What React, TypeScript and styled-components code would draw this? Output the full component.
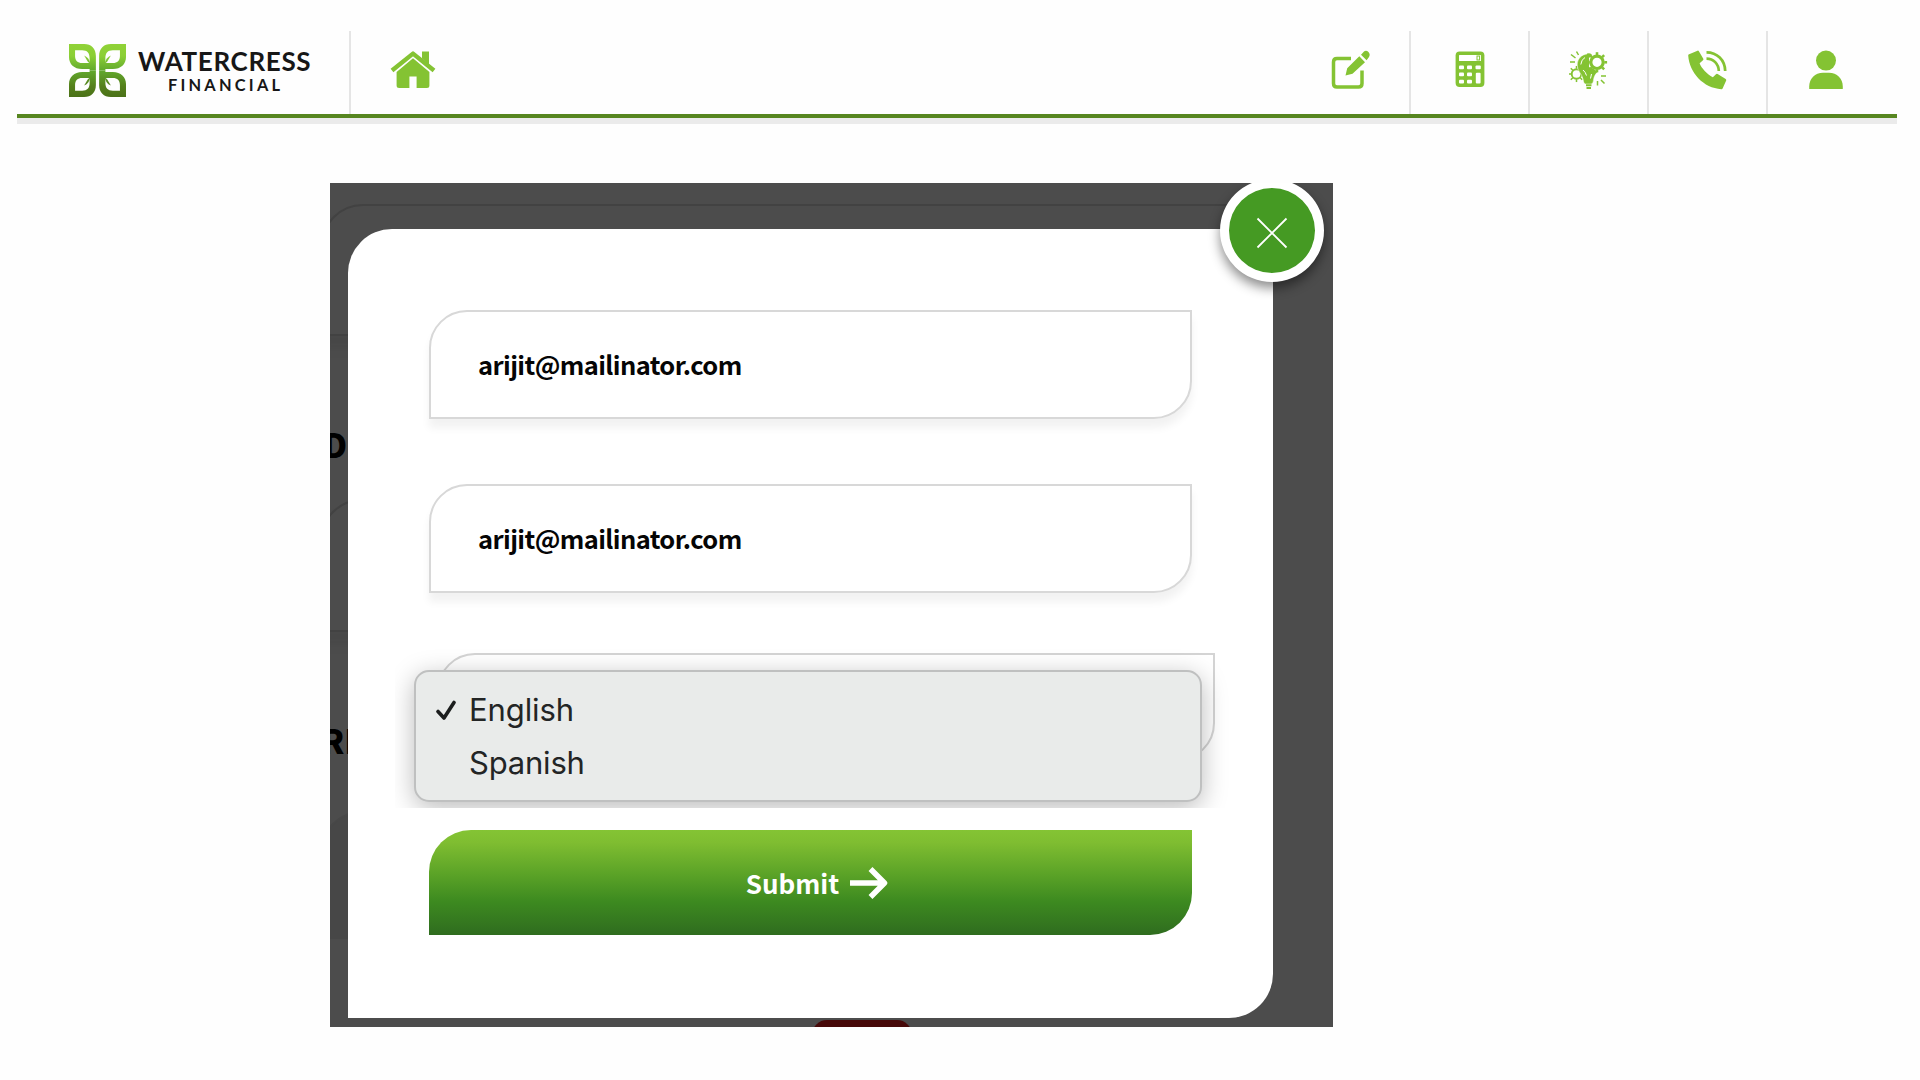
import React from 'react';
import styled, { createGlobalStyle, css } from 'styled-components';

const GREEN = '#84c333';

const Global = createGlobalStyle`
  * { box-sizing: border-box; }
  body { margin: 0; background: #fff; overflow: hidden; }
`;

const Page = styled.div`
  width: 1920px;
  height: 1080px;
  padding: 31px 23px 0 17px;
  background: #fefefe;
`;

const Header = styled.header`
  display: flex;
  height: 87px;
  border-bottom: 4px solid #578620;
  box-shadow: 0 6px 0 #ebebeb;
`;

const Brand = styled.a`
  display: flex;
  align-items: flex-start;
  gap: 12px;
  width: 334px;
  padding: 13px 0 0 52px;
  border-right: 2px solid #e5e5e5;
`;

const BrandText = styled.div`
  display: flex;
  flex-direction: column;
  font-family: Lato, sans-serif;
  color: #171717;
  white-space: nowrap;
`;

const BrandName = styled.span`
  margin-top: 3px;
  font-size: 26px;
  line-height: 28px;
  font-weight: 700;
  letter-spacing: 0.65px;
`;

const BrandSub = styled.span`
  margin-left: 30px;
  font-size: 16.4px;
  line-height: 20px;
  font-weight: 700;
  letter-spacing: 3.2px;
`;

const HomeLink = styled.a`
  display: flex;
  padding: 19px 0 0 39px;
`;

const Tools = styled.nav`
  display: flex;
  margin-left: auto;
`;

const Tool = styled.a`
  display: flex;
  justify-content: center;
  width: 119px;
  padding-top: 19px;
  border-left: 2px solid #e5e5e5;
  &:first-child { border-left-color: transparent; }
  &:last-child { width: 131px; padding-right: 13px; }
`;

const Stage = styled.main`
  position: relative;
  width: 1003px;
  height: 844px;
  margin: 65px 0 0 313px;
  padding: 46px 60px 9px 18px;
  background: #4c4c4c;
  overflow: hidden;
`;

const Behind = styled.div`
  position: absolute;
  inset: 0;
  font-family: "Noto Sans CJK SC", sans-serif;
  font-weight: 900;
  font-size: 33px;
  line-height: 40px;
  color: #000;
`;

const GhostPanel = styled.div<{ $top: number; $height: number; $left: number; $fill?: boolean }>`
  position: absolute;
  top: ${p => p.$top}px;
  left: ${p => p.$left}px;
  width: 940px;
  height: ${p => p.$height}px;
  border: 2px solid #424242;
  border-radius: 42px 0 42px 0;
  box-shadow: 0 12px 8px #484848;
  ${p => p.$fill && css`background: #474747; border-color: #474747; box-shadow: none;`}
`;

const GhostText = styled.span<{ $top: number; $left: number }>`
  position: absolute;
  top: ${p => p.$top}px;
  left: ${p => p.$left}px;
`;

const GhostPill = styled.div`
  position: absolute;
  left: 482px;
  top: 837px;
  width: 100px;
  height: 30px;
  border-radius: 20px;
  background: #470909;
`;

const Modal = styled.form`
  position: relative;
  display: flex;
  flex-direction: column;
  height: 789px;
  padding: 81px 81px 0;
  background: #fff;
  border-radius: 44px 0 44px 0;
`;

const Close = styled.button`
  position: absolute;
  top: -50px;
  right: -51px;
  display: grid;
  place-items: center;
  width: 104px;
  height: 103px;
  padding: 4px 0 0;
  border: 9px solid #fff;
  border-radius: 50%;
  background: #459a23;
  box-shadow: 0 6px 12px rgba(0, 0, 0, 0.45);
`;

const Field = styled.div`
  display: flex;
  align-items: center;
  flex: none;
  height: 109px;
  margin-bottom: 64.500px;
  padding: 0 0 1px 47px;
  border: 2px solid #d8d8d8;
  border-radius: 38px 0 38px 0;
  box-shadow: 0 9px 8px rgba(0, 0, 0, 0.055);
  background: #fff;
  font: 700 25.500px/40px "Noto Sans CJK SC", sans-serif;
  letter-spacing: -0.600px;
  color: #050505;
`;

const SelectArea = styled.div`
  position: relative;
  flex: none;
  height: 168px;
  margin: -17px -40px 0 -34px;
  padding: 13px 17px 0 42px;
  overflow: hidden;
`;

const SelectBox = styled.div`
  height: 108px;
  border: 2px solid #d4d4d4;
  border-radius: 38px 0 38px 0;
`;

const Menu = styled.ul`
  position: absolute;
  top: 30px;
  left: 19px;
  width: 788px;
  height: 132px;
  margin: 0;
  padding: 15px 0 0 20px;
  list-style: none;
  border: 2px solid #bfc0c0;
  border-radius: 15px;
  background: #e9ebea;
  box-shadow: 0 6px 26px rgba(0, 0, 0, 0.27);
`;

const Option = styled.li`
  display: grid;
  grid-template-columns: 20px auto;
  column-gap: 13px;
  align-items: center;
  height: 53px;
  padding-bottom: 7px;
  font: 400 31px/46px Inter, sans-serif;
  color: #232525;
`;

const OptionLabel = styled.span<{ $tracking: number }>`
  letter-spacing: ${p => p.$tracking}px;
`;

const Submit = styled.button`
  display: flex;
  align-items: center;
  justify-content: center;
  gap: 11px;
  flex: none;
  height: 105px;
  margin-top: 22px;
  padding: 0 0 0 13px;
  border: 0;
  border-radius: 42px 0 42px 0;
  background: linear-gradient(#84c434 0%, #7fbd31 12%, #5ba327 42%, #3d8a20 68%, #2f6c1f 100%);
  color: #fff;
  font: 700 26px/40px "Noto Sans CJK SC", sans-serif;
`;

const LEAF =
  'M0 0H15C22 0 26.6 4.6 26.6 12V26.4H20.4V25H13C5 25 0 20 0 13ZM6 6.3V12C6 16.5 8.5 19 13 19H20.4V14C20.4 9 18 6.3 13 6.3Z';

const Leaf = ({ t }: { t: string }) => (
  <g transform={t}>
    <path fillRule="evenodd" d={LEAF} />
    <path d="M15 11.5C18.6 13 20.6 16 21 20L18.5 17.5Z" />
  </g>
);

const LogoMark = () => (
  <svg width="57" height="53" viewBox="0 0 56.4 52.8" preserveAspectRatio="none">
    <defs>
      <linearGradient id="leaf" gradientUnits="userSpaceOnUse" x1="0" y1="0" x2="0" y2="26.4">
        <stop offset="0" stopColor="#90d237" />
        <stop offset="0.45" stopColor="#8bcf35" />
        <stop offset="1" stopColor="#62a92d" />
      </linearGradient>
      <linearGradient id="leafLow" gradientUnits="userSpaceOnUse" x1="0" y1="0" x2="0" y2="26.4">
        <stop offset="0" stopColor="#4b7118" />
        <stop offset="0.4" stopColor="#547f1b" />
        <stop offset="1" stopColor="#62a92d" />
      </linearGradient>
    </defs>
    <g fill="url(#leaf)">
      <Leaf t="" />
      <Leaf t="translate(56.4 0) scale(-1 1)" />
    </g>
    <g fill="url(#leafLow)">
      <Leaf t="translate(0 52.8) scale(1 -1)" />
      <Leaf t="translate(56.4 52.8) scale(-1 -1)" />
    </g>
  </svg>
);

const HomeIcon = () => (
  <svg width="46" height="39" viewBox="0 0 46 39" fill={GREEN}>
    <path d="M32 1.5H39V14.5L32 8.5Z" />
    <path d="M2 20.500L23 3.600L44 20.500" fill="none" stroke={GREEN} strokeWidth="4.400" strokeLinejoin="round" />
    <path d="M23 8.300L39.400 22V35.500Q39.400 38 36.900 38H26.600V26.500H19.400V38H9.100Q6.600 38 6.600 35.500V22Z" />
  </svg>
);

const EditIcon = () => (
  <svg width="40" height="40" viewBox="0 0 40 40">
    <path d="M20 8.5H6Q2.5 8.5 2.5 12V33.5Q2.5 37 6 37H27.500Q31 37 31 33.500V20.500" fill="none" stroke={GREEN} strokeWidth="3.5" />
    <path fill={GREEN} d="M28.3 6.300L34 12.200L21.500 23.800L14.500 25.600L16.200 18.300ZM30 4.800L33 1.600Q35-.2 37.500 2Q39.600 4.500 38 7L35.600 10.300Z" />
  </svg>
);

const CalculatorIcon = () => (
  <svg width="30" height="38" viewBox="0 0 30 38">
    <rect x="0.600" y="1.500" width="28.800" height="35.500" rx="4" fill={GREEN} />
    <g fill="#fff">
      <rect x="4" y="5" width="22" height="6" rx="0.500" />
      {[15.500, 22.500, 29.800].map(y => [4, 12].map(x => (
        <rect key={`${x}-${y}`} x={x} y={y} width="5" height="3.800" rx="1" />
      )))}
      <rect x="20.500" y="15.500" width="5.300" height="3.800" rx="1" />
      <rect x="20.800" y="22.800" width="4.800" height="10.800" rx="1" />
    </g>
    <rect x="22" y="6" width="2.600" height="4" fill="none" stroke={GREEN} />
  </svg>
);

const teeth = [0, 45, 90, 135, 180, 225, 270, 315];

const Gear = ({ x, y, r, w }: { x: number; y: number; r: number; w: number }) => (
  <g transform={`translate(${x} ${y})`} stroke={GREEN} fill="none">
    <circle r={r} strokeWidth={w} />
    {teeth.map(a => (
      <path key={a} d={`M0 ${-r - w / 2 + 0.500}V${-r - w / 2 - 2.300}`} strokeWidth={w * 0.800} transform={`rotate(${a})`} />
    ))}
  </g>
);

const IdeaIcon = () => (
  <svg width="39" height="40" viewBox="0 0 39 40">
    <Gear x={7.500} y={24} r={4.800} w={1.900} />
    <path
      d="M19 4C12.500 4 8.200 9 8.200 15C8.200 21 13 24 14 29Q14.300 33 16 34H22.500Q24.500 33 24.700 29C25 26 27 24 28.500 21.500L24 18L18 17L17 11L21 5Z"
      fill={GREEN}
      stroke="#fff"
      strokeWidth="0.500"
    />
    <path d="M11.800 14.500Q12.300 9.500 16 7.500M14 20Q16.500 22 17.500 25.500M22.500 24L21.500 28.500" stroke="#fff" strokeWidth="1" fill="none" />
    <path d="M18 3.500Q22 2.500 23 5L20 8V17L28 22.500Q24 25 19 22.500Q14 19 16 12Z" fill={GREEN} />
    <circle cx="28" cy="12.300" r="7.500" fill="#fff" />
    <Gear x={28} y={12.300} r={6.200} w={3.200} />
    <path d="M17 35.300H22.500M17.500 38H22" stroke={GREEN} strokeWidth="2" />
    <path d="M7.500 1.500L9.500 5M2 4.500L6.500 8M1 12H6M32 26H37M32 30L35.500 33.500M28.500 31V35.500" stroke={GREEN} strokeWidth="1.500" />
  </svg>
);

const PhoneIcon = () => (
  <svg width="39" height="40" viewBox="0 0 39 40">
    <path
      fill={GREEN}
      d="M0.500 4.500L9.500 0.700Q10.400 0.400 10.900 1.200L15.300 8.800Q15.700 9.600 15 10.200L11.600 13.200C13.500 18.200 19 24.200 24.800 27.200L28 24.200Q28.800 23.500 29.600 24L37.700 29Q38.500 29.600 38.200 30.400L34.600 38.500Q34.300 39.300 33.400 39.200C15.500 38 1.500 23 0.200 5.500Z"
    />
    <path d="M18.500 2.300C29 2.300 37 10 37.200 21M18.500 8.600C25.500 8.600 30.600 14 30.800 21" fill="none" stroke={GREEN} strokeWidth="2.700" />
  </svg>
);

const UserIcon = () => (
  <svg width="34" height="40" viewBox="0 0 34 40" fill={GREEN}>
    <circle cx="17" cy="10.600" r="10" />
    <path d="M0.200 39V36.500C0.200 28.500 6 22.700 14 22.700H20C28 22.700 33.800 28.500 33.800 36.500V39Z" />
  </svg>
);

export default function App() {
  return (
    <Page>
      <Global />
      <Header>
        <Brand>
          <LogoMark />
          <BrandText>
            <BrandName>WATERCRESS</BrandName>
            <BrandSub>FINANCIAL</BrandSub>
          </BrandText>
        </Brand>
        <HomeLink><HomeIcon /></HomeLink>
        <Tools>
          <Tool><EditIcon /></Tool>
          <Tool><CalculatorIcon /></Tool>
          <Tool><IdeaIcon /></Tool>
          <Tool><PhoneIcon /></Tool>
          <Tool><UserIcon /></Tool>
        </Tools>
      </Header>
      <Stage>
        <Behind>
          <GhostPanel $top={21} $height={132} $left={-9} />
          <GhostPanel $top={316} $height={133} $left={-10} />
          <GhostPanel $top={628} $height={128} $left={-10} $fill />
          <GhostText $top={241} $left={-7}>D</GhostText>
          <GhostText $top={537} $left={-9}>RE</GhostText>
          <GhostPill />
        </Behind>
        <Modal>
          <Field>arijit@mailinator.com</Field>
          <Field>arijit@mailinator.com</Field>
          <SelectArea>
            <SelectBox />
            <Menu>
              <Option>
                <svg width="20" height="21" viewBox="0 0 20 21">
                  <path d="M2 11.500L8 18L18 2.500" fill="none" stroke="#1c1e1e" strokeWidth="3.600" strokeLinecap="round" strokeLinejoin="round" />
                </svg>
                <OptionLabel $tracking={-0.1}>English</OptionLabel>
              </Option>
              <Option>
                <span />
                <OptionLabel $tracking={-0.2}>Spanish</OptionLabel>
              </Option>
            </Menu>
          </SelectArea>
          <Submit type="button">
            Submit
            <svg width="38" height="34" viewBox="0 0 38 34">
              <path d="M0 17H33M20.500 3L34.500 17L20.500 31" fill="none" stroke="#fff" strokeWidth="5.500" strokeLinejoin="round" />
            </svg>
          </Submit>
          <Close type="button">
            <svg width="32" height="32" viewBox="0 0 32 32">
              <path d="M1.500 1.500L30.500 30.500M30.500 1.500L1.500 30.500" stroke="#fff" strokeWidth="1.800" />
            </svg>
          </Close>
        </Modal>
      </Stage>
    </Page>
  );
}
